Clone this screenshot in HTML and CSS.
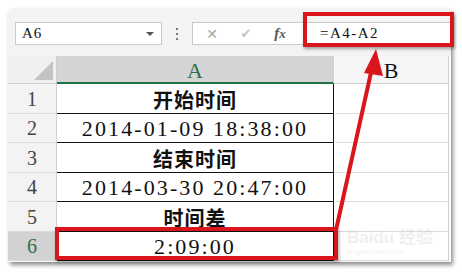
FILE: index.html
```html
<!DOCTYPE html>
<html lang="zh-CN">
<head>
  <meta charset="UTF-8">
  <title>时间差</title>
  <link rel="stylesheet" href="styles.css">
</head>
<body>
  <div class="window">
    <div class="toolbar">
      <div class="namebox">
        <span>A6</span>
        <i class="caret"></i>
      </div>
      <div class="dots"><i></i><i></i><i></i></div>
      <div class="fbar">
        <div class="fbtns">
          <span class="ic ic-x">&#x2715;</span>
          <span class="ic ic-ok">&#x2714;</span>
          <span class="ic ic-fx"><em>f</em>x</span>
        </div>
        <div class="finput">=A4-A2</div>
      </div>
    </div>

    <div class="sheet">
      <div class="corner"></div>
      <div class="colhead sel">A</div>
      <div class="colhead">B</div>

      <div class="rowhead">1</div>
      <div class="cell a title">开始时间</div>
      <div class="cell b"></div>

      <div class="rowhead">2</div>
      <div class="cell a">2014-01-09 18:38:00</div>
      <div class="cell b"></div>

      <div class="rowhead">3</div>
      <div class="cell a title">结束时间</div>
      <div class="cell b"></div>

      <div class="rowhead">4</div>
      <div class="cell a">2014-03-30 20:47:00</div>
      <div class="cell b"></div>

      <div class="rowhead">5</div>
      <div class="cell a title">时间差</div>
      <div class="cell b"></div>

      <div class="rowhead sel">6</div>
      <div class="cell a">2:09:00</div>
      <div class="cell b"></div>
    </div>
  </div>

  <!-- 标注：红框 + 箭头 -->
  <div class="mark mark-formula"></div>
  <div class="mark mark-cell"></div>
  <svg class="arrow" width="462" height="274" viewBox="0 0 462 274">
    <line x1="336" y1="230" x2="372" y2="68" stroke="#d9161c" stroke-width="4" stroke-linecap="round"/>
    <polygon points="376,49 383,76 364,73" fill="#d9161c"/>
  </svg>
  <div class="watermark">Bai<b>du</b> 经验<small>jingyan.baidu.com</small></div>
</body>
</html>
```

FILE: styles.css
```css
html,
body {
      margin: 0;
      padding: 0;
      overflow: hidden;
}

body {
      width: 462px;
      height: 274px;
      background: #fff;
      font-family: "Liberation Serif", "Noto Sans CJK SC", serif;
      color: #111;
}

.window {
      margin: 8px 0 0 8px;
      width: 443px;
      height: 254px;
      background: #f3f3f3;
      border-radius: 5px 5px 0 0;
      box-shadow: 2px 3px 4px rgba(0, 0, 0, .45);
      overflow: hidden;
}

/* 顶部编辑栏 */
.toolbar {
      height: 48px;
      display: flex;
      align-items: center;
      padding: 3px 0 0 7px;
      box-sizing: border-box;
}

.namebox {
      width: 147px;
      height: 23px;
      box-sizing: border-box;
      background: #fff;
      border: 1px solid #c9c9c9;
      display: flex;
      align-items: center;
      justify-content: space-between;
      padding: 0 7px 0 6px;
      font-size: 15px;
      letter-spacing: 1px;
}

.caret {
      width: 0;
      height: 0;
      border-left: 4px solid transparent;
      border-right: 4px solid transparent;
      border-top: 4px solid #555;
}

.dots {
      width: 30px;
      display: flex;
      flex-direction: column;
      align-items: center;
      gap: 3px;
}

.dots i {
      width: 2px;
      height: 2px;
      background: #777;
}

.fbar {
      flex: 1;
      height: 23px;
      display: flex;
      background: #fff;
      border: 1px solid #c9c9c9;
      border-right: none;
      box-sizing: border-box;
}

.fbtns {
      width: 110px;
      display: flex;
      align-items: center;
      border-right: 1px solid #d6d6d6;
}

.ic {
      width: 34px;
      text-align: center;
      color: #a6a6a6;
      font-size: 13px;
}

.ic-x {
      margin-left: 2px;
      font-size: 14px;
      font-family: "DejaVu Sans", sans-serif;
}

.ic-ok {
      color: #c4c4c4;
      font-family: "DejaVu Sans", sans-serif;
}

.ic-fx {
      color: #555;
      font-size: 13px;
      font-style: italic;
      font-weight: bold;
}

.ic-fx em {
      font-size: 15px;
}

.finput {
      flex: 1;
      display: flex;
      align-items: center;
      padding-left: 16px;
      font-size: 15px;
      letter-spacing: 1.5px;
}

/* 表格 */
.sheet {
      display: grid;
      grid-template-columns: 49px 277px 115px;
      grid-template-rows: 28px repeat(6, 29.5px);
      background: #fff;
}

.corner {
      background: #f0f0f0;
      border-right: 1px solid #d0d0d0;
      border-bottom: 1px solid #d0d0d0;
      position: relative;
}

.corner::after {
      content: "";
      position: absolute;
      right: 3px;
      bottom: 3px;
      border-left: 19px solid transparent;
      border-bottom: 19px solid #c3c3c3;
}

.colhead {
      background: #f6f6f6;
      border-right: 1px solid #d0d0d0;
      border-bottom: 1px solid #d0d0d0;
      display: flex;
      justify-content: center;
      align-items: flex-end;
      padding-bottom: 1px;
      font-size: 22px;
      line-height: 1;
}

.colhead.sel {
      background: #d4d4d4;
      color: #2f6e4a;
      border-bottom: 2px solid #217346;
      padding-bottom: 0;
}

.rowhead {
      background: #f3f3f3;
      border-right: 1px solid #cfcfcf;
      border-bottom: 1px solid #dadada;
      display: flex;
      justify-content: center;
      align-items: center;
      font-size: 20px;
      color: #444;
      padding-top: 2px;
}

.rowhead.sel {
      background: #d2d2d2;
      color: #2f6e4a;
}

.cell {
      display: flex;
      justify-content: center;
      align-items: center;
      box-sizing: border-box;
}

.cell.a {
      border-bottom: 1px solid #111;
      border-right: 1px solid #111;
      font-size: 22px;
      letter-spacing: 2.1px;
      padding-top: 2px;
}

.cell.title {
      font-family: "Noto Sans CJK SC", sans-serif;
      font-weight: bold;
      font-size: 20px;
      letter-spacing: 1px;
}

.cell.b {
      border-bottom: 1px solid #dcdcdc;
      border-right: 1px solid #cfcfcf;
}

/* 标注 */
.mark {
      position: absolute;
      border: 4px solid #d9161c;
      box-shadow: 1px 2px 3px rgba(0, 0, 0, .35);
}

.mark-formula {
      left: 303px;
      top: 12px;
      width: 143px;
      height: 27px;
}

.mark-cell {
      left: 55px;
      top: 227px;
      width: 275px;
      height: 25px;
}

.arrow {
      position: absolute;
      left: 0;
      top: 0;
}

.watermark {
      position: absolute;
      left: 347px;
      top: 229px;
      color: rgba(170, 170, 170, .2);
      font-family: "Liberation Sans", "Noto Sans CJK SC", sans-serif;
      font-size: 17px;
      font-weight: bold;
      line-height: 1;
}

.watermark small {
      display: block;
      font-size: 7px;
      font-weight: normal;
      margin-top: 2px;
}
```
